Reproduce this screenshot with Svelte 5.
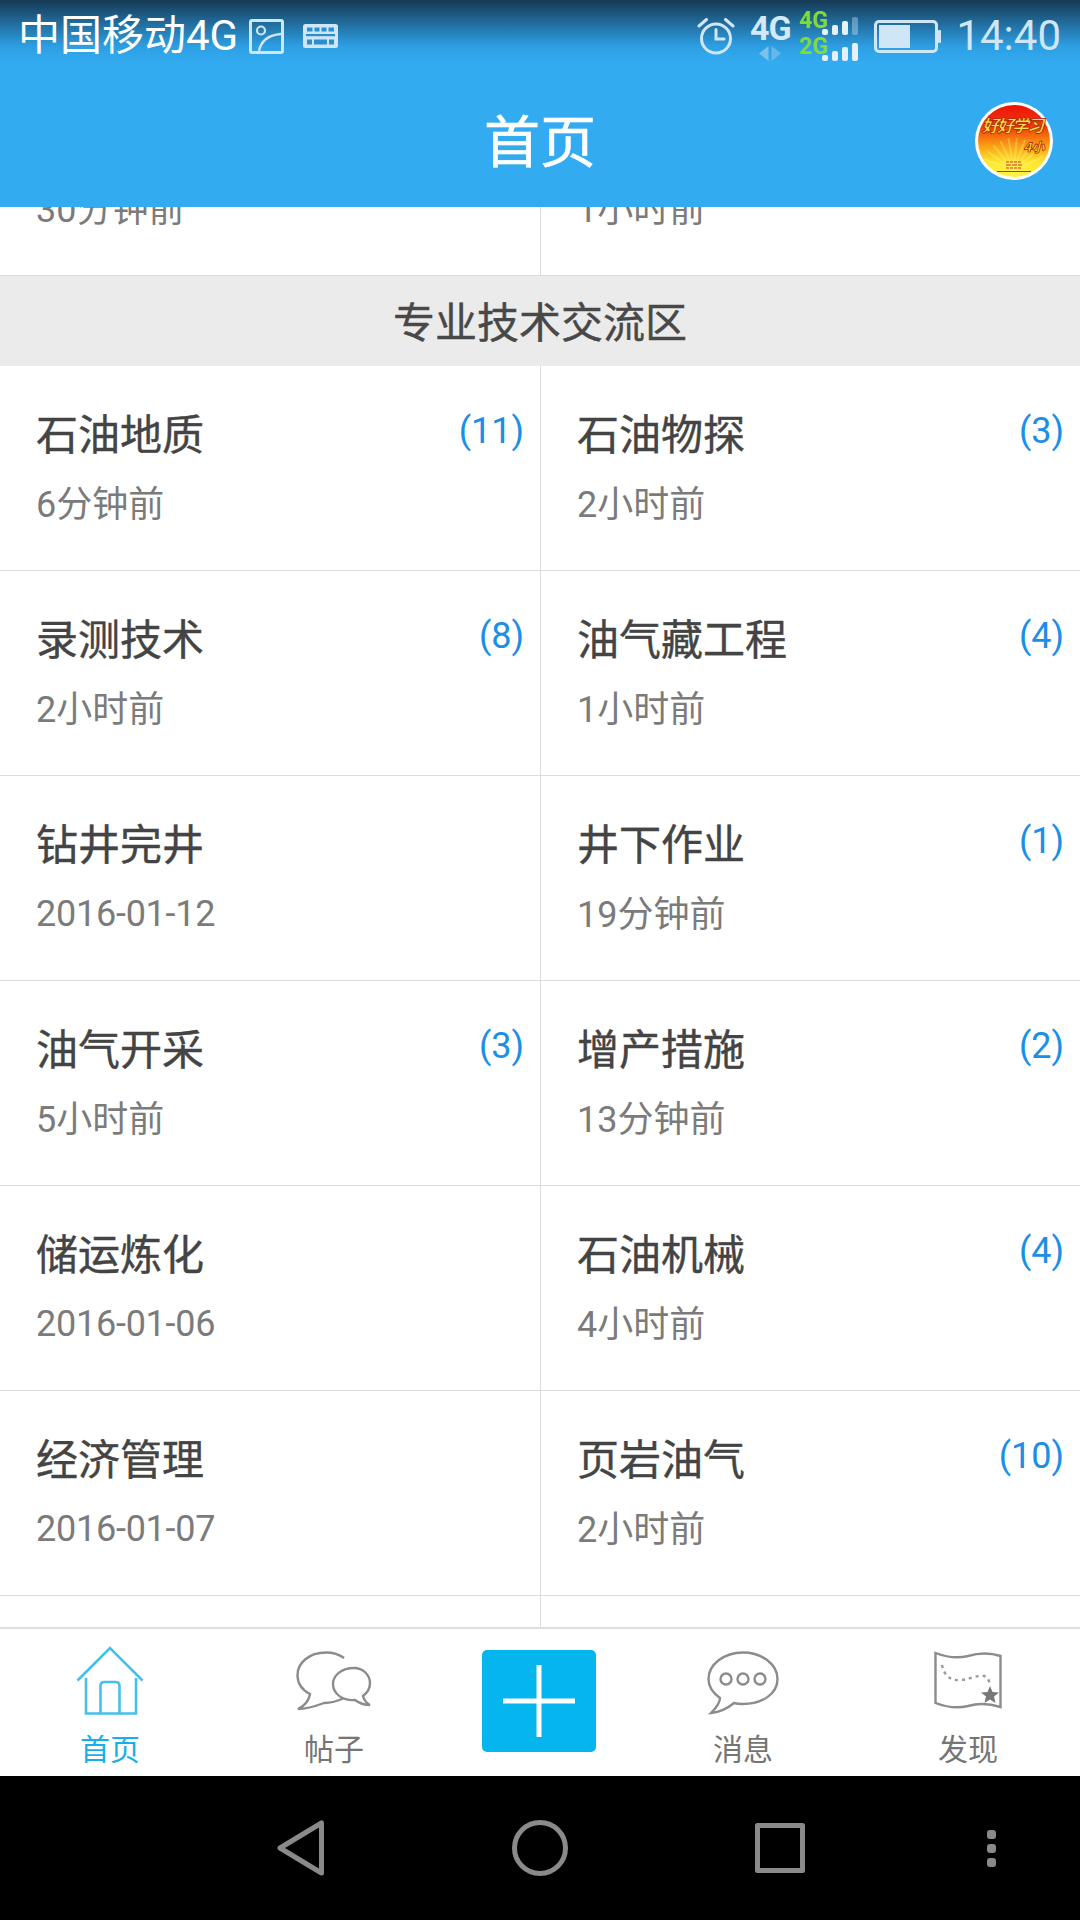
<script>
  const top = [{ sub: '30分钟前' }, { sub: '1小时前' }];
  const rows = [
    { t: '石油地质', s: '6分钟前', c: 11 }, { t: '石油物探', s: '2小时前', c: 3 },
    { t: '录测技术', s: '2小时前', c: 8 }, { t: '油气藏工程', s: '1小时前', c: 4 },
    { t: '钻井完井', s: '2016-01-12', date: true }, { t: '井下作业', s: '19分钟前', c: 1 },
    { t: '油气开采', s: '5小时前', c: 3 }, { t: '增产措施', s: '13分钟前', c: 2 },
    { t: '储运炼化', s: '2016-01-06', date: true }, { t: '石油机械', s: '4小时前', c: 4 },
    { t: '经济管理', s: '2016-01-07', date: true }, { t: '页岩油气', s: '2小时前', c: 10 },
    {}, {}
  ];
  const rays = [-70, -55, -40, -25, -10, 5, 20, 35, 50, 65];
</script>

<div class="screen">
  <header class="header">
    <div class="status">
      <div class="status-left">
        <span class="carrier">中国移动4G</span>
        <svg class="ic-image" width="35" height="35" viewBox="0 0 35 35" fill="none" stroke="#cfe6f7" stroke-width="3">
          <rect x="1.500" y="1.500" width="32" height="32" rx="1.500" />
          <circle cx="12" cy="11.500" r="4" stroke-width="2.200" />
          <path d="M10 32 C12 22 20 16 32 15" stroke-width="2.400" />
        </svg>
        <svg class="ic-keyboard" width="35" height="24" viewBox="0 0 35 24">
          <rect width="35" height="24" rx="2.500" fill="#cfe6f7" />
          <g fill="#2a8fd0">
            <rect x="4" y="3.500" width="5.500" height="4" /><rect x="11.500" y="3.500" width="5" height="4" /><rect x="18.500" y="3.500" width="5" height="4" /><rect x="25.500" y="3.500" width="5.500" height="4" />
            <rect x="3" y="10" width="29" height="2.200" />
            <rect x="4" y="15.500" width="5" height="5" /><rect x="11" y="15.500" width="13" height="5" /><rect x="26" y="15.500" width="5" height="5" />
          </g>
        </svg>
      </div>
      <div class="status-right">
        <svg class="ic-alarm" width="38" height="40" viewBox="0 0 38 40" fill="none" stroke="#cfe6f7" stroke-linecap="round">
          <circle cx="19" cy="22.500" r="14.500" stroke-width="3" />
          <path d="M19 13.500 V23 H27" stroke-width="3" />
          <path d="M2 10 L9.500 3.500 M36 10 L28.500 3.500" stroke-width="3" />
        </svg>
        <div class="net">
          <span class="net-label">4G</span>
          <svg width="24" height="15" viewBox="0 0 24 15" fill="#7fc0ea">
            <path d="M10.500 0 V15 L1 7.500 Z" /><path d="M13.500 0 V15 L23 7.500 Z" opacity=".7" />
          </svg>
        </div>
        <svg class="signal" width="64" height="54" viewBox="0 0 64 54">
          <text x="0" y="18" class="sim">4G</text>
          <text x="0" y="44" class="sim">2G</text>
          <g fill="#e4f1fb">
            <rect x="23" y="19" width="6" height="6" rx="2" /><rect x="33" y="15" width="6" height="10" rx="2" /><rect x="43" y="11" width="6" height="14" rx="2" />
            <rect x="53" y="7" width="6" height="18" rx="2" opacity=".35" />
            <rect x="23" y="45" width="6" height="6" rx="2" /><rect x="33" y="41" width="6" height="10" rx="2" /><rect x="43" y="37" width="6" height="14" rx="2" /><rect x="53" y="33" width="6" height="18" rx="2" />
          </g>
        </svg>
        <svg class="battery" width="67" height="33" viewBox="0 0 67 33" fill="none">
          <rect x="1.500" y="1.500" width="61" height="30" rx="3.500" stroke="#cfe6f7" stroke-width="3" />
          <rect x="5" y="5" width="31" height="23" fill="#cfe6f7" />
          <rect x="64" y="10" width="3" height="13" rx="1" fill="#cfe6f7" />
        </svg>
        <span class="time">14:40</span>
      </div>
    </div>
    <div class="titlebar">
      <h1>首页</h1>
      <svg class="avatar" width="78" height="78" viewBox="0 0 78 78">
        <defs>
          <linearGradient id="sky" x1="0" y1="0" x2="0" y2="1">
            <stop offset="0" stop-color="#ee1208" />
            <stop offset=".3" stop-color="#f23a0a" />
            <stop offset=".55" stop-color="#fb9a12" />
            <stop offset=".8" stop-color="#fde82c" />
            <stop offset="1" stop-color="#fff34a" />
          </linearGradient>
          <clipPath id="disc"><circle cx="39" cy="39" r="36" /></clipPath>
        </defs>
        <circle cx="39" cy="39" r="39" fill="#fff" />
        <circle cx="39" cy="39" r="36" fill="url(#sky)" />
        <g clip-path="url(#disc)" stroke="#fff8a0" stroke-width="2" opacity=".3">
          {#each rays as r}
            <line x1="39" y1="68" x2="39" y2="36" transform="rotate({r} 39 68)" />
          {/each}
        </g>
        <text x="38" y="30" class="motto" textLength="62">好好学习</text>
        <text x="59" y="50" class="motto small">4小</text>
        <g stroke="#c8360c" stroke-width="1.200">
          <line x1="31" y1="60" x2="47" y2="60" stroke-dasharray="3 1" />
          <line x1="31" y1="63" x2="47" y2="63" stroke-dasharray="5 1" />
          <line x1="31" y1="66" x2="47" y2="66" stroke-dasharray="3 1" />
          <line x1="22" y1="69.500" x2="56" y2="69.500" />
        </g>
      </svg>
    </div>
  </header>

  <main class="content">
    <div class="grid offset">
      {#each top as cell}
        <div class="cell"><div class="name"></div><div class="sub">{cell.sub}</div></div>
      {/each}
    </div>
    <div class="section">专业技术交流区</div>
    <div class="grid">
      {#each rows as cell}
        <div class="cell">
          {#if cell.t}
            <div class="name">{cell.t}</div>
            <div class="sub" class:date={cell.date}>{cell.s}</div>
            {#if cell.c}<span class="count">({cell.c})</span>{/if}
          {/if}
        </div>
      {/each}
    </div>
  </main>

  <nav class="tabs">
    <div class="tab active">
      <svg width="68" height="70" viewBox="0 0 68 70" fill="none" stroke="#45c0ec" stroke-width="2.600">
        <path d="M1.500 34.500 L34 2 L66.500 34.500" />
        <path d="M10 32 V67.500 H60 V32" />
        <path d="M24.500 67 V40 Q24.500 36 28.500 36 H39.500 Q43.500 36 43.500 40 V67" />
      </svg>
      <span>首页</span>
    </div>
    <div class="tab">
      <svg width="76" height="62" viewBox="0 0 76 62" fill="none" stroke="#8c8c8c" stroke-width="2.400">
        <path d="M48 7 C42 2.500 36 1.500 30 1.500 C13 1.500 1.500 12 1.500 24 C1.500 32 6 39 14 43 C13 50 8 55 2 58 C12 58 20 55 28 52 C36 52 42 50 48 47" />
        <path d="M58 17 C67 17 74 24 74 32 C74 38 71 42 67 45 C68 49 70 52 74 54 C68 54 63 52 59 49 C47 50 37 43 37 33 C37 24 46 17 58 17 Z" />
      </svg>
      <span>帖子</span>
    </div>
    <div class="tab plus-cell">
      <button class="plus" aria-label="发布">
        <svg width="72" height="72" viewBox="0 0 72 72" fill="#fff"><rect x="33.500" y="0" width="5" height="72" /><rect x="0" y="33.500" width="72" height="5" /></svg>
      </button>
    </div>
    <div class="tab">
      <svg width="72" height="64" viewBox="0 0 72 64" fill="none" stroke="#8c8c8c" stroke-width="2.400">
        <path d="M36 1.500 C55 1.500 70.500 13.500 70.500 28 C70.500 43 55 53 36 53 C33 53 30 53 27 52 C21 57 14 61 4 62 C9 57 13 52 13 47 C6 42 1.500 35 1.500 28 C1.500 13.500 17 1.500 36 1.500 Z" />
        <circle cx="19" cy="28" r="5.500" /><circle cx="36" cy="28" r="5.500" /><circle cx="53" cy="28" r="5.500" />
      </svg>
      <span>消息</span>
    </div>
    <div class="tab">
      <svg width="68" height="58" viewBox="0 0 68 58" fill="none" stroke="#8c8c8c" stroke-width="2.400">
        <path d="M1.500 2 C12 6 22 8 34 5 C44 2 54 1 66.500 5 V56 C54 52 44 52 34 55 C22 58 12 56 1.500 52 Z" />
        <path d="M8 14 C10 24 16 30 26 29 C34 29 42 24 50 25 C54 26 55 30 56 33" stroke-dasharray="3 4" stroke="#999" />
        <path d="M56 35 L58.500 41 L65 41.500 L60 45.500 L61.500 52 L56 48.500 L50.500 52 L52 45.500 L47 41.500 L53.500 41 Z" fill="#777" stroke="none" />
      </svg>
      <span>发现</span>
    </div>
  </nav>

  <footer class="navbar">
    <svg class="back" width="48" height="56" viewBox="0 0 48 56" fill="none" stroke="#8a8a8a" stroke-width="5" stroke-linejoin="round">
      <path d="M44.500 3 V53 L3 28 Z" />
    </svg>
    <svg class="home" width="56" height="56" viewBox="0 0 56 56" fill="none" stroke="#8a8a8a" stroke-width="5"><circle cx="28" cy="28" r="25.500" /></svg>
    <svg class="recent" width="50" height="50" viewBox="0 0 50 50" fill="none" stroke="#8a8a8a" stroke-width="5" stroke-linejoin="round"><rect x="2.500" y="2.500" width="45" height="45" /></svg>
    <svg class="more" width="9" height="37" viewBox="0 0 9 37" fill="#8a8a8a">
      <rect width="9" height="9" rx="3" /><rect y="14" width="9" height="9" rx="3" /><rect y="28" width="9" height="9" rx="3" />
    </svg>
  </footer>
</div>

<style>
  :global(body) {
    margin: 0;
    background: #fff;
  }
  .screen {
    width: 1080px;
    height: 1920px;
    display: flex;
    flex-direction: column;
    overflow: hidden;
    font-family: Roboto, "Noto Sans CJK SC", sans-serif;
  }
  .header {
    height: 207px;
    flex: none;
    position: relative;
    z-index: 2;
    background: linear-gradient(#153a55 0, #2d9ee2 46px, #33abf1 62px);
  }
  .status {
    height: 72px;
    display: flex;
    justify-content: space-between;
    align-items: center;
    color: #fff;
  }
  .status-left {
    display: flex;
    align-items: center;
    padding-left: 18px;
  }
  .carrier {
    font-size: 42px;
    line-height: 46px;
    font-weight: 400;
    width: 231px;
    white-space: nowrap;
  }
  .ic-keyboard {
    margin-left: 19px;
  }
  .status-right {
    display: flex;
    align-items: center;
    padding-right: 19px;
  }
  .net {
    display: flex;
    flex-direction: column;
    align-items: center;
    margin-left: 15px;
    width: 40px;
  }
  .net-label {
    font-size: 34px;
    line-height: 32px;
    font-weight: 700;
    color: #d4e8f8;
    letter-spacing: -1px;
  }
  .net svg {
    margin-top: 2px;
  }
  .signal {
    margin-left: 9px;
    margin-top: 2px;
  }
  .sim {
    font-family: Roboto, sans-serif;
    font-size: 23px;
    font-weight: 700;
    fill: #7edb38;
  }
  .battery {
    margin-left: 11px;
  }
  .time {
    font-size: 42px;
    line-height: 46px;
    color: #cfe6f7;
    margin-left: 15px;
  }
  .titlebar {
    height: 135px;
    position: relative;
    display: flex;
    align-items: center;
    justify-content: center;
  }
  h1 {
    margin: 0;
    font-size: 56px;
    line-height: 70px;
    font-weight: 400;
    -webkit-text-stroke: 0.6px #fff;
    color: #fff;
    position: relative;
    top: 3px;
  }
  .avatar {
    position: absolute;
    right: 27px;
    top: 30px;
  }
  .motto {
    font-family: "Noto Sans CJK SC", sans-serif;
    font-size: 17px;
    font-weight: 900;
    font-style: italic;
    fill: #ffe23a;
    stroke: #a81208;
    stroke-width: .7px;
    text-anchor: middle;
  }
  .motto.small {
    font-size: 13px;
    fill: #ffdf30;
  }
  .content {
    flex: 1;
    min-height: 0;
    overflow: hidden;
    background: #fff;
  }
  .grid {
    display: grid;
    grid-template-columns: 541px 539px;
    grid-auto-rows: 205px;
  }
  .offset {
    margin-top: -136px;
  }
  .cell {
    position: relative;
    box-sizing: border-box;
    padding: 45px 0 0 36px;
    border-bottom: 1px solid #dcdcdc;
  }
  .cell:nth-child(odd) {
    border-right: 1px solid #dcdcdc;
  }
  .name {
    height: 50px;
    font-size: 42px;
    line-height: 50px;
    font-weight: 400;
    -webkit-text-stroke: 0.4px #444;
    color: #444;
    white-space: nowrap;
  }
  .sub {
    margin-top: 19px;
    font-size: 36px;
    line-height: 50px;
    color: #7b7b7b;
    white-space: nowrap;
  }
  .sub.date {
    letter-spacing: -0.25px;
    position: relative;
    top: -1px;
  }
  .count {
    position: absolute;
    right: 16px;
    top: 40px;
    font-size: 36px;
    line-height: 50px;
    color: #1b8fe6;
  }
  .section {
    height: 90px;
    box-sizing: border-box;
    padding-top: 3px;
    background: #ebebeb;
    text-align: center;
    font-size: 42px;
    line-height: 90px;
    font-weight: 400;
    -webkit-text-stroke: 0.4px #484848;
    color: #484848;
  }
  .tabs {
    height: 149px;
    flex: none;
    box-sizing: border-box;
    border-top: 2px solid #dedede;
    background: #fff;
    display: grid;
    grid-template-columns: 220px 228px 182px 226px 224px;
    position: relative;
  }
  .tab {
    position: relative;
    display: flex;
    flex-direction: column;
    align-items: center;
    justify-content: flex-end;
    padding-bottom: 8px;
    font-size: 30px;
    line-height: 36px;
    color: #757575;
  }
  .tab svg {
    position: absolute;
    left: 50%;
    transform: translateX(-50%);
    top: 22px;
  }
  .tab.active {
    color: #16b0e8;
  }
  .tab.active svg {
    top: 17px;
  }
  .plus-cell {
    justify-content: flex-start;
    padding: 0;
  }
  .plus {
    width: 114px;
    height: 102px;
    margin-top: 21px;
    padding: 0;
    border: 0;
    border-radius: 5px;
    background: #05b5ee;
    position: relative;
  }
  .plus svg {
    top: 15px;
  }
  .navbar {
    height: 144px;
    flex: none;
    background: #000;
    display: flex;
    align-items: center;
    padding-left: 277px;
    box-sizing: border-box;
  }
  .home {
    margin-left: 187px;
  }
  .recent {
    margin-left: 187px;
  }
  .more {
    margin-left: 182px;
  }
</style>
